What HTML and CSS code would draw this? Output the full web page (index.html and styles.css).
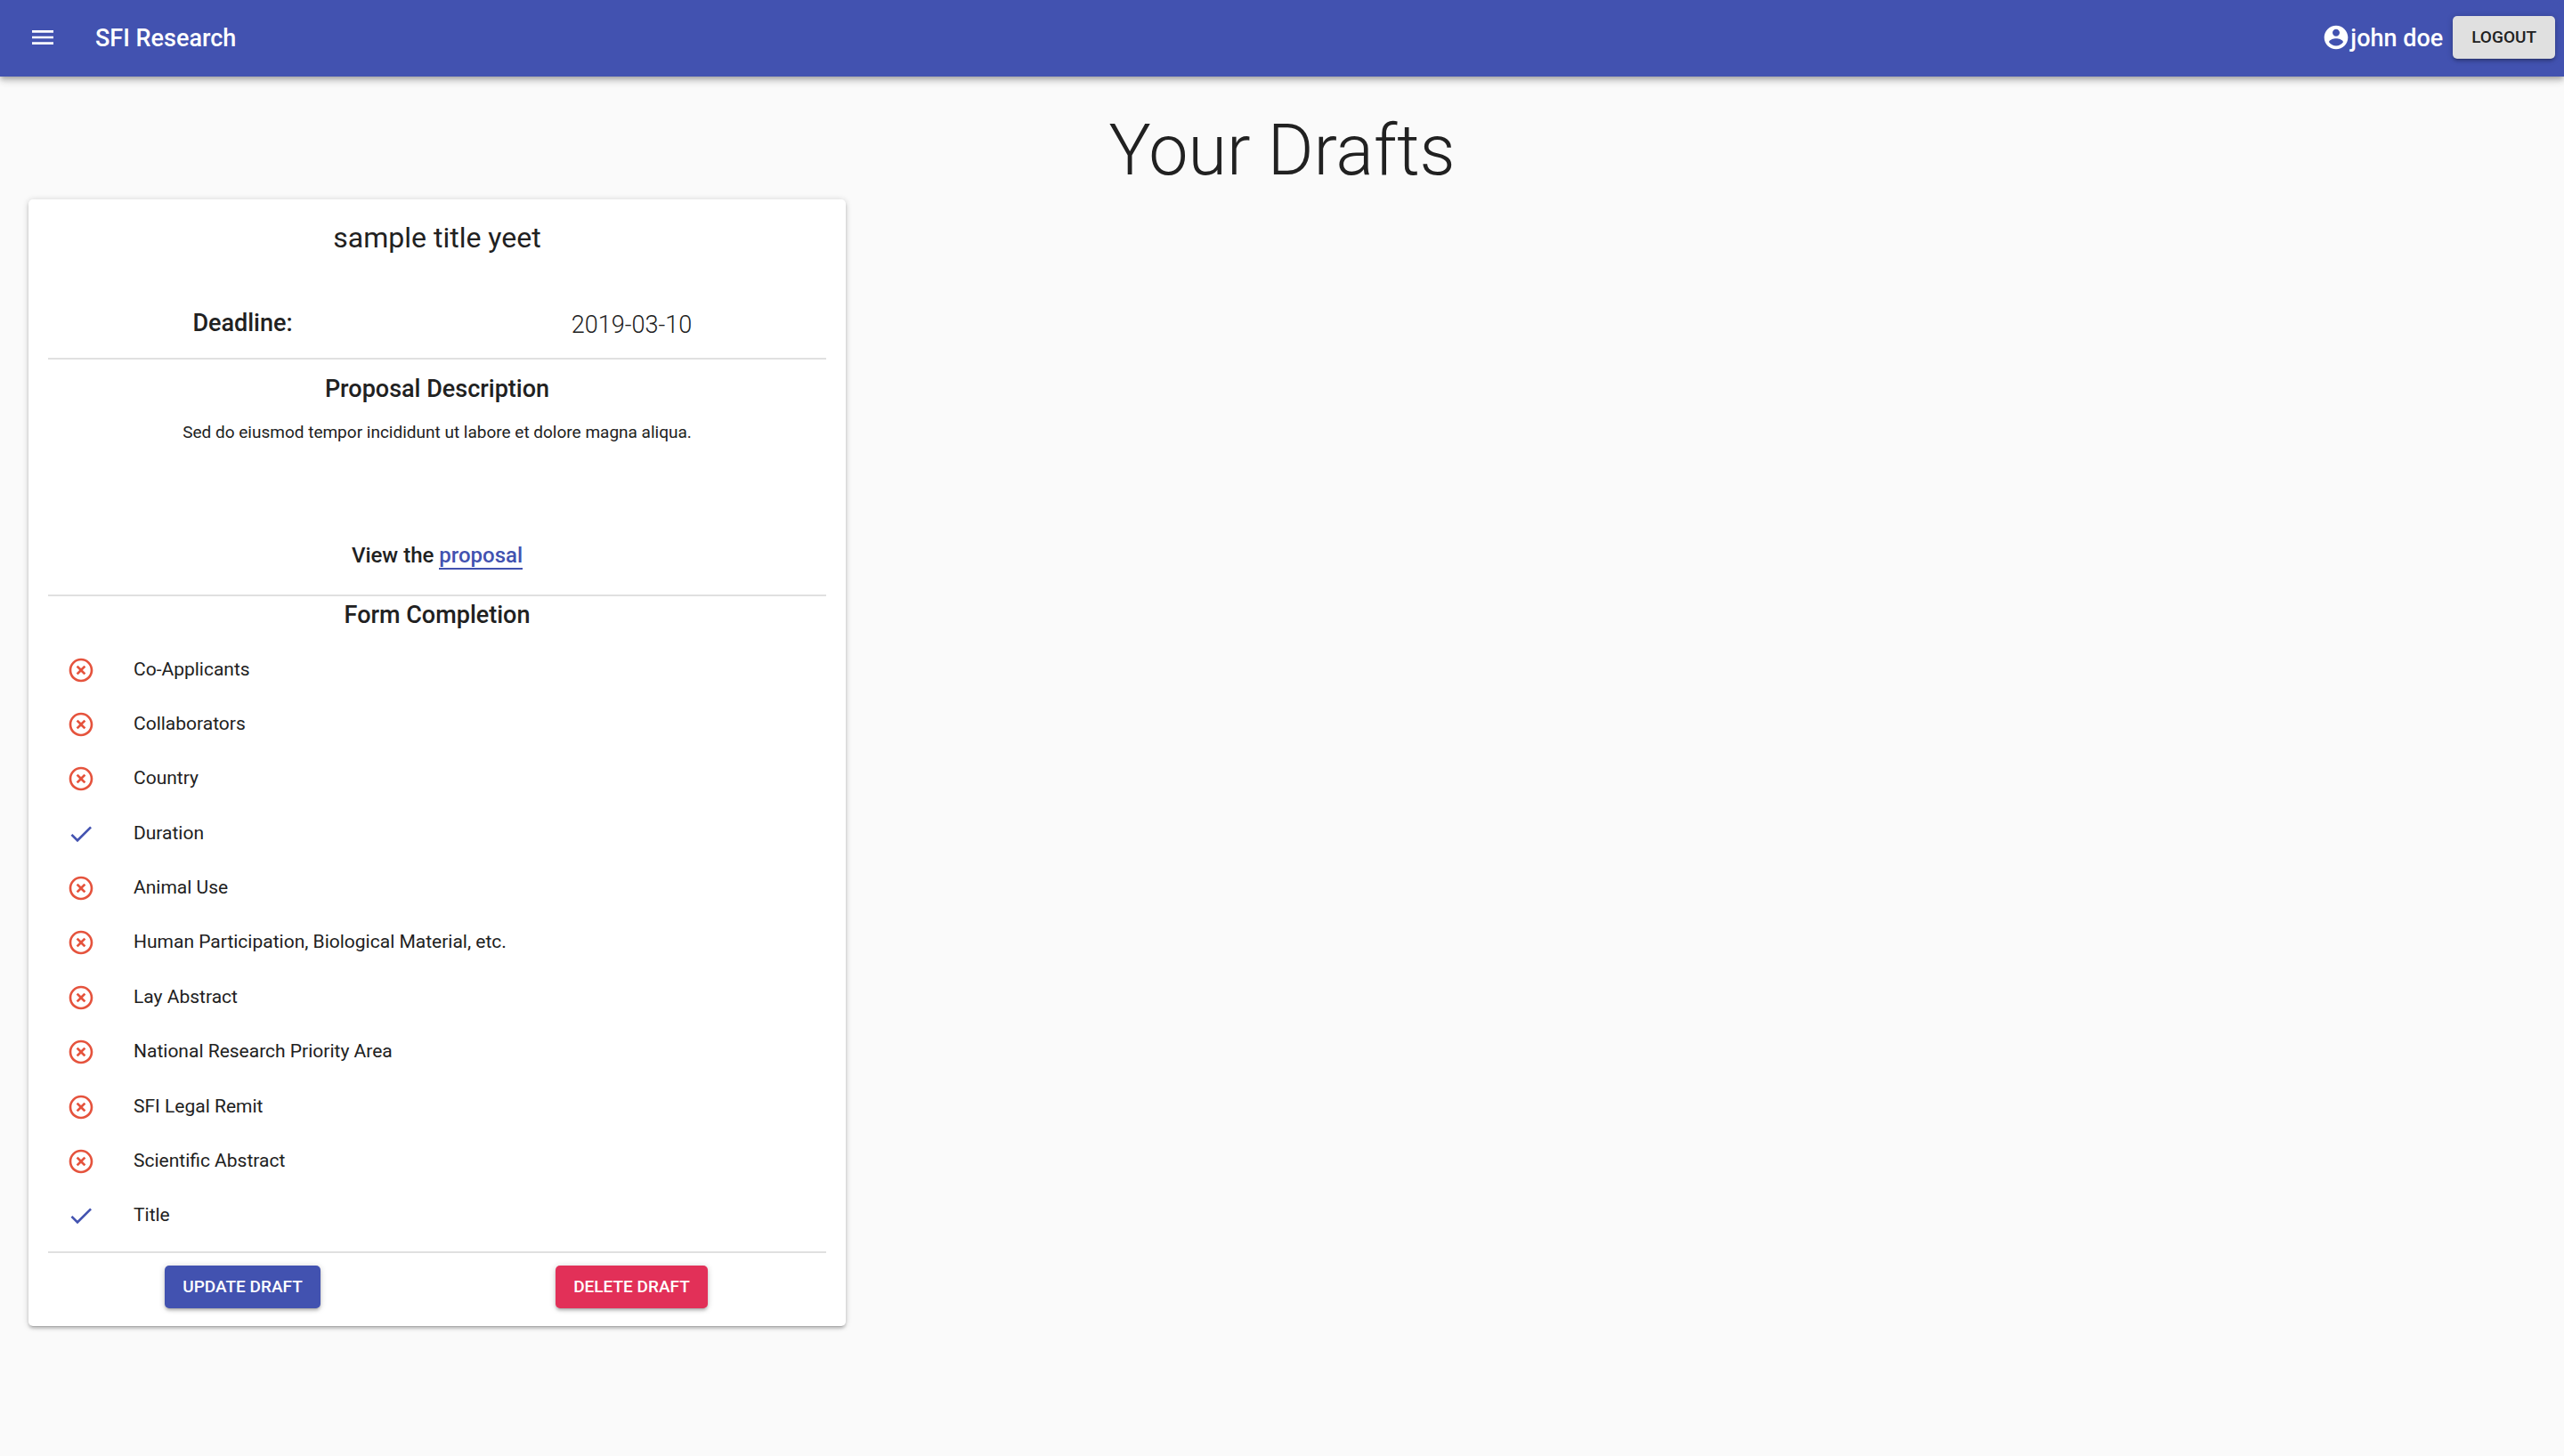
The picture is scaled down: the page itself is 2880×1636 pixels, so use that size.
FILE: index.html
```html
<!DOCTYPE html>
<html lang="en">
<head>
<meta charset="utf-8">
<meta name="viewport" content="width=device-width, initial-scale=1">
<title>SFI Research</title>
<link rel="stylesheet" href="styles.css">
</head>
<body>
<svg class="sprite" aria-hidden="true">
  <symbol id="missing" viewBox="0 0 24 24"><path d="M14.59 8L12 10.59 9.41 8 8 9.41 10.59 12 8 14.59 9.41 16 12 13.41 14.59 16 16 14.59 13.41 12 16 9.41 14.59 8zM12 2C6.47 2 2 6.47 2 12s4.47 10 10 10 10-4.47 10-10S17.53 2 12 2zm0 18c-4.41 0-8-3.59-8-8s3.59-8 8-8 8 3.59 8 8-3.59 8-8 8z"/></symbol>
  <symbol id="done" viewBox="0 0 24 24"><path d="M9 16.2L4.8 12l-1.4 1.4L9 19 21 7l-1.4-1.4L9 16.2z"/></symbol>
</svg>
<header class="appbar">
  <button class="menu" type="button" aria-label="Open menu">
    <svg class="icon" viewBox="0 0 24 24"><path d="M3 18h18v-2H3v2zm0-5h18v-2H3v2zm0-7v2h18V6H3z"/></svg>
  </button>
  <span class="brand">SFI Research</span>
  <div class="user">
    <svg class="icon" viewBox="0 0 24 24" aria-hidden="true"><path d="M12 2C6.48 2 2 6.48 2 12s4.48 10 10 10 10-4.48 10-10S17.52 2 12 2zm0 3c1.66 0 3 1.34 3 3s-1.34 3-3 3-3-1.34-3-3 1.34-3 3-3zm0 14.2c-2.5 0-4.71-1.28-6-3.22.03-1.99 4-3.08 6-3.08 1.99 0 5.97 1.09 6 3.08-1.29 1.94-3.5 3.22-6 3.22z"/></svg>
    <span>john doe</span>
  </div>
  <button class="btn" type="button">LOGOUT</button>
</header>
<main class="page">
  <h1 class="page-title">Your Drafts</h1>
  <div class="drafts">
    <article class="card">
      <h2 class="card-title">sample title yeet</h2>
      <div class="halves deadline">
        <h3 class="heading">Deadline:</h3>
        <time class="date" datetime="2019-03-10">2019-03-10</time>
      </div>
      <section class="description">
        <h3 class="heading">Proposal Description</h3>
        <p class="text">Sed do eiusmod tempor incididunt ut labore et dolore magna aliqua.</p>
        <p class="view">View the <a class="link" href="#proposal">proposal</a></p>
      </section>
      <section class="completion">
        <h3 class="heading">Form Completion</h3>
        <ul class="list">
          <li class="item"><svg class="icon missing"><use href="#missing"/></svg><span>Co-Applicants</span></li>
          <li class="item"><svg class="icon missing"><use href="#missing"/></svg><span>Collaborators</span></li>
          <li class="item"><svg class="icon missing"><use href="#missing"/></svg><span>Country</span></li>
          <li class="item"><svg class="icon done"><use href="#done"/></svg><span>Duration</span></li>
          <li class="item"><svg class="icon missing"><use href="#missing"/></svg><span>Animal Use</span></li>
          <li class="item"><svg class="icon missing"><use href="#missing"/></svg><span>Human Participation, Biological Material, etc.</span></li>
          <li class="item"><svg class="icon missing"><use href="#missing"/></svg><span>Lay Abstract</span></li>
          <li class="item"><svg class="icon missing"><use href="#missing"/></svg><span>National Research Priority Area</span></li>
          <li class="item"><svg class="icon missing"><use href="#missing"/></svg><span>SFI Legal Remit</span></li>
          <li class="item"><svg class="icon missing"><use href="#missing"/></svg><span>Scientific Abstract</span></li>
          <li class="item"><svg class="icon done"><use href="#done"/></svg><span>Title</span></li>
        </ul>
      </section>
      <div class="halves actions">
        <button class="btn primary" type="button">UPDATE DRAFT</button>
        <button class="btn danger" type="button">DELETE DRAFT</button>
      </div>
    </article>
  </div>
</main>
</body>
</html>
```
FILE: styles.css
```css
* {
  box-sizing: border-box;
}

body {
  margin: 0;
  background: #fafafa;
  color: #212121;
  font-family: Roboto, "Liberation Sans", sans-serif;
  font-size: 19px;
}

h1, h2, h3, p, ul {
  margin: 0;
  padding: 0;
}

.sprite {
  display: none;
}

.icon {
  display: block;
  flex: none;
  width: 32px;
  height: 32px;
  fill: currentColor;
}

.appbar {
  display: flex;
  align-items: center;
  height: 86px;
  padding: 0 10px 2px 16px;
  background: #4252b0;
  color: #fff;
  font-size: 27px;
  font-weight: 500;
  line-height: 32px;
  box-shadow: 0 3px 5px -1px rgba(0, 0, 0, .2), 0 5px 7px rgba(0, 0, 0, .14), 0 1px 13px rgba(0, 0, 0, .12);
}

.menu {
  padding: 16px;
  border: 0;
  background: none;
  color: inherit;
}

.brand {
  flex: 1;
  padding: 2px 0 0 27px;
}

.user {
  display: flex;
  align-items: center;
  margin-right: 11px;
}

.user span {
  padding-top: 2px;
}

.btn {
  height: 48px;
  padding: 0 21px;
  border: 0;
  border-radius: 5px;
  background: #e0e0e0;
  color: #212121;
  font: 500 19px/32px Roboto, "Liberation Sans", sans-serif;
  box-shadow: 0 1px 7px rgba(0, 0, 0, .2), 0 3px 3px rgba(0, 0, 0, .14), 0 4px 1px -3px rgba(0, 0, 0, .12);
}

.primary {
  background: #4252b0;
  color: #fff;
}

.danger {
  background: #e23058;
  color: #fff;
}

.page {
  padding: 32px;
}

.page-title {
  font-size: 79px;
  font-weight: 300;
  line-height: 102px;
  padding-bottom: 4px;
  text-align: center;
}

.drafts {
  display: grid;
  grid-template-columns: repeat(3, 1fr);
  gap: 31px;
}

.card {
  padding: 22px 22px 20px;
  border-radius: 5px;
  background: #fff;
  text-align: center;
  box-shadow: 0 1px 7px rgba(0, 0, 0, .2), 0 3px 3px rgba(0, 0, 0, .14), 0 4px 1px -3px rgba(0, 0, 0, .12);
}

.card-title {
  font-size: 32px;
  font-weight: 400;
  line-height: 42px;
}

.halves {
  display: grid;
  grid-template-columns: 1fr 1fr;
  justify-items: center;
}

.heading {
  font-size: 27px;
  font-weight: 500;
  line-height: 42px;
}

.deadline {
  padding: 54px 0 16px;
  border-bottom: 2px solid #e0e0e0;
}

.date {
  padding-top: 2px;
  font-size: 27px;
  font-weight: 300;
  line-height: 42px;
}

.description {
  padding: 12px 0 18px;
  border-bottom: 2px solid #e0e0e0;
}

.text {
  min-height: 118px;
  padding-top: 14px;
  line-height: 28px;
}

.view {
  padding: 32px 0 10px;
  font-size: 24px;
  font-weight: 500;
  line-height: 32px;
}

.link {
  border-bottom: 2px solid currentColor;
  color: #4252b0;
  text-decoration: none;
}

.list {
  display: grid;
  grid-auto-rows: 1fr;
  min-height: 675px;
  margin: 10px 0 9px;
  list-style: none;
  text-align: left;
}

.item {
  display: flex;
  align-items: center;
  gap: 43px;
  padding: 0 21px;
  font-size: 21px;
  line-height: 32px;
}

.item span {
  padding-bottom: 2px;
}

.missing {
  color: #e5533d;
}

.done {
  color: #4252b0;
}

.actions {
  padding-top: 14px;
  border-top: 2px solid #e0e0e0;
}

.actions .btn {
  padding: 0 20px;
}
```
